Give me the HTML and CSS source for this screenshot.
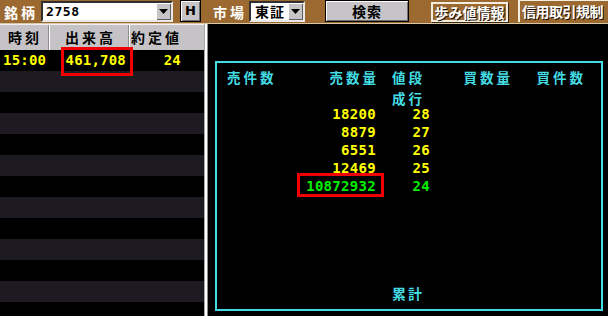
FILE: index.html
```html
<!DOCTYPE html>
<html lang="ja">
<head>
    <meta charset="UTF-8">
    <title>歩み値</title>
    <link rel="stylesheet" href="styles.css">
</head>
<body>

<!-- top toolbar -->
<div class="topbar">
    <span class="lbl lbl-code">銘柄</span>
    <div class="combo combo-code">
        <span class="combo-val mono">2758</span>
        <span class="drop"><svg width="9" height="6" viewBox="0 0 9 6"><polygon points="0,0 9,0 4.5,5" fill="#000"/></svg></span>
    </div>
    <span class="btn btn-h">H</span>
    <span class="lbl lbl-mkt">市場</span>
    <div class="combo combo-mkt">
        <span class="combo-val">東証</span>
        <span class="drop"><svg width="9" height="6" viewBox="0 0 9 6"><polygon points="0,0 9,0 4.5,5" fill="#000"/></svg></span>
    </div>
    <span class="btn btn-search">検索</span>
    <span class="tab tab-ayumi">歩み値情報</span>
    <span class="tab tab-shinyo">信用取引規制</span>
</div>

<div class="main">

    <!-- tick list -->
    <div class="left">
        <div class="thead">
            <div class="th col-time">時刻</div>
            <div class="th col-vol">出来高</div>
            <div class="th col-price">約定値</div>
        </div>
        <div class="tick">
            <span class="col-time mono">15:00</span>
            <span class="col-vol mono">461,708<span class="mark mark-vol"></span></span>
            <span class="col-price mono">24</span>
        </div>
        <div class="tick"></div>
        <div class="tick"></div>
        <div class="tick"></div>
        <div class="tick"></div>
        <div class="tick"></div>
        <div class="tick"></div>
        <div class="tick"></div>
        <div class="tick"></div>
        <div class="tick"></div>
        <div class="tick"></div>
        <div class="tick"></div>
        <div class="tick"></div>
    </div>

    <div class="divider"></div>

    <!-- board -->
    <div class="right">
        <div class="board">
            <div class="grid">
                <span class="hd">売件数</span>
                <span class="hd r">売数量</span>
                <span class="hd p">値段</span>
                <span class="hd r">買数量</span>
                <span class="hd r">買件数</span>

                <span></span><span></span><span class="hd p market">成行</span><span></span><span></span>

                <span></span><span class="num">18200</span><span class="num">28</span><span></span><span></span>
                <span></span><span class="num">8879</span><span class="num">27</span><span></span><span></span>
                <span></span><span class="num">6551</span><span class="num">26</span><span></span><span></span>
                <span></span><span class="num">12469</span><span class="num">25</span><span></span><span></span>
                <span></span><span class="num now">10872932<span class="mark mark-qty"></span></span><span class="num now">24</span><span></span><span></span>
            </div>
            <div class="total">累計</div>
        </div>
    </div>

</div>

</body>
</html>
```

FILE: styles.css
```css
html, body {
  margin: 0;
  padding: 0;
}

body {
  width: 608px;
  height: 316px;
  overflow: hidden;
  background-color: #000;
  font-family: "Noto Sans CJK JP", "DejaVu Sans", sans-serif;
  font-size: 14px;
  font-weight: 700;
}

.mono {
  font-family: "DejaVu Sans Mono", "Liberation Mono", monospace;
  font-weight: 700;
}

/* top toolbar */
.topbar {
  height: 23px;
  border-bottom: 1px solid #d8c8a8;
  background-color: #9c6a30;
  display: flex;
  align-items: flex-start;
  padding-left: 4px;
}

.lbl {
  color: #fff;
  letter-spacing: 3px;
  line-height: 24px;
}
.lbl-code { width: 37px; }
.lbl-mkt { width: 36px; margin-left: 12px; }

.combo {
  margin-top: 1px;
  height: 21px;
  box-sizing: border-box;
  background-color: #fff;
  border: 2px solid;
  border-color: #303030 #e8e8e8 #e8e8e8 #303030;
  display: flex;
  align-items: stretch;
}
.combo-code { width: 132px; }
.combo-mkt { width: 56px; }

.combo-val {
  flex: 1;
  color: #000;
  line-height: 17px;
  padding-left: 3px;
}
.combo-code .combo-val { font-size: 13px; letter-spacing: 0.6px; }
.combo-mkt .combo-val { padding-left: 4px; letter-spacing: 1px; }

.drop {
  width: 15px;
  background-color: #c6c4c6;
  box-shadow: inset 1px 1px 0 #fff, inset -1px -1px 0 #606060;
  display: flex;
  align-items: center;
  justify-content: center;
}

.btn {
  height: 22px;
  box-sizing: border-box;
  background-color: #c6c4c6;
  border: 1px solid #000;
  box-shadow: inset 1px 1px 0 #fff, inset -1px -1px 0 #707070;
  color: #000;
  text-align: center;
  line-height: 20px;
}
.btn-h { width: 21px; margin-left: 7px; font-family: "DejaVu Sans", sans-serif; font-size: 13px; }
.btn-search { width: 84px; margin-left: 20px; letter-spacing: 1px; }

.tab {
  margin-top: 2px;
  height: 20px;
  box-sizing: border-box;
  color: #fff;
  text-shadow: 1px 1px 0 #1c1008;
  line-height: 17px;
  text-align: center;
  font-size: 14px;
}
.tab-ayumi {
  width: 77px;
  margin-left: 22px;
  border: 2px solid #f4eee0;
  box-shadow: 1px 1px 0 #3c2810;
}
.tab-shinyo {
  width: 90px;
  margin-left: 10px;
  margin-top: 0;
  height: 22px;
  line-height: 20px;
  border-left: 2px solid #f4eee0;
  border-top: 1px solid #f4eee0;
  padding-left: 2px;
  text-align: left;
  letter-spacing: -0.5px;
}

/* main area */
.main {
  display: flex;
  height: 292px;
}

.left {
  width: 204px;
  display: flex;
  flex-direction: column;
}

.thead {
  height: 26px;
  box-sizing: border-box;
  background-color: #c6c3c6;
  border-top: 1px solid #f0f0f0;
  display: flex;
  color: #000;
}

.th {
  line-height: 25px;
  letter-spacing: 3px;
}
.thead .col-time { width: 49px; border-right: 1px solid #8c8c8c; text-align: center; padding-left: 2px; box-sizing: border-box; }
.thead .col-vol { width: 80px; border-right: 1px solid #8c8c8c; border-left: 1px solid #fff; text-align: center; padding-left: 3px; box-sizing: border-box; }
.thead .col-price { flex: 1; border-left: 1px solid #fff; padding-left: 1px; }

.tick {
  height: 21px;
  flex-shrink: 0;
  display: flex;
  color: #ffff00;
  font-size: 14px;
  line-height: 21px;
  letter-spacing: 0.2px;
}
.tick:nth-child(odd) {
  background-color: #1e1a22;
}
.tick .col-time { width: 50px; padding-left: 3px; box-sizing: border-box; }
.tick .col-vol { width: 81px; text-align: right; padding-right: 5px; box-sizing: border-box; position: relative; }
.tick .col-price { flex: 1; text-align: right; padding-right: 23px; }

/* red highlight frames drawn over the figures */
.mark {
  position: absolute;
  border: 3px solid #f00000;
  z-index: 2;
}
.mark-vol { left: 11px; right: -2px; top: -3px; bottom: -5px; }
.mark-qty { left: -3px; right: -8px; top: -4px; bottom: -3px; }

.divider {
  width: 4px;
  background: linear-gradient(to right, #a8a8a8 1px, #ffffff 1px 3px, #8c8c8c 3px);
}

.right {
  flex: 1;
  padding: 37px 5px 5px 7px;
}

.board {
  height: 250px;
  box-sizing: border-box;
  border: 2px solid #44dce4;
  display: flex;
  flex-direction: column;
}

.grid {
  display: grid;
  grid-template-columns: 73px 76px 54px 80px 73px;
  grid-auto-rows: 18px;
  padding: 5px 0 0 10px;
  line-height: 18px;
}

.hd {
  color: #44dce4;
  letter-spacing: 3px;
  font-size: 13.5px;
}
.hd.r { text-align: right; margin-right: -3px; }
.hd.p { padding-left: 16px; }
.hd.market { padding-top: 3px; }

.num {
  font-family: "DejaVu Sans Mono", "Liberation Mono", monospace;
  color: #ffff00;
  text-align: right;
  letter-spacing: 0.3px;
  position: relative;
}
.grid .num { margin-top: 1px; }
.num.now { color: #00f000; }

.total {
  margin-top: auto;
  margin-bottom: 7px;
  padding-left: 175px;
  color: #44dce4;
  letter-spacing: 2px;
  line-height: 18px;
}
```
